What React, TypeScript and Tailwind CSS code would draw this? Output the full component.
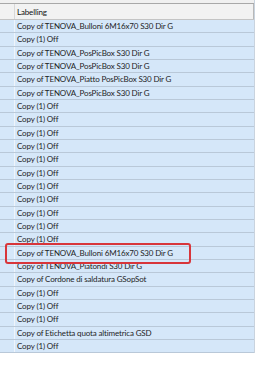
import React from "react";

const rows = [
  "Copy of TENOVA_Bulloni 6M16x70 S30 Dir G",
  "Copy (1) Off",
  "Copy of TENOVA_PosPicBox S30 Dir G",
  "Copy of TENOVA_PosPicBox S30 Dir G",
  "Copy of TENOVA_Piatto PosPicBox S30 Dir G",
  "Copy of TENOVA_PosPicBox S30 Dir G",
  "Copy (1) Off",
  "Copy (1) Off",
  "Copy (1) Off",
  "Copy (1) Off",
  "Copy (1) Off",
  "Copy (1) Off",
  "Copy (1) Off",
  "Copy (1) Off",
  "Copy (1) Off",
  "Copy (1) Off",
  "Copy (1) Off",
  "Copy of TENOVA_Bulloni 6M16x70 S30 Dir G",
  "Copy of TENOVA_Piatondi S30 Dir G",
  "Copy of Cordone di saldatura GSopSot",
  "Copy (1) Off",
  "Copy (1) Off",
  "Copy (1) Off",
  "Copy of Etichetta quota altimetrica GSD",
  "Copy (1) Off",
];

export default function App() {
  return (
    <div className="relative w-[276px] h-[373px] bg-white overflow-hidden text-[8px] tracking-[-0.15px] text-[#1e1e1e]" style={{ fontFamily: 'Lato, "Open Sans", sans-serif' }}>
      <div className="w-[255px] border-r border-[#c9d3de]">
        {/* top strip */}
        <div className="h-[4px] bg-[#f0f0f0] border-b border-[#a8a8a8]" />
        {/* header */}
        <div className="flex h-[16px] bg-[#f2f2f2] border-b border-[#c4c4c4]">
          <div className="w-[15px] border-r border-[#d8d8d8]" />
          <div className="flex-1 flex items-center pl-[2px] border-r border-[#b8b8b8] text-[#111]">Labelling</div>
        </div>
        {/* rows */}
        {rows.map((r, i) => (
          <div key={i} className="flex h-[13.33px] bg-[#d5e7f9] border-b border-[#b9c8d8]">
            <div className="w-[15px] border-r border-[#eef4fb]" />
            <div className="flex-1 flex items-center pl-[2px] leading-none whitespace-nowrap overflow-hidden">{r}</div>
          </div>
        ))}
      </div>
      {/* highlight box */}
      <div className="absolute left-[5px] top-[243px] w-[186px] h-[21px] border-2 border-[#d8353a] rounded-[3px]" />
    </div>
  );
}
